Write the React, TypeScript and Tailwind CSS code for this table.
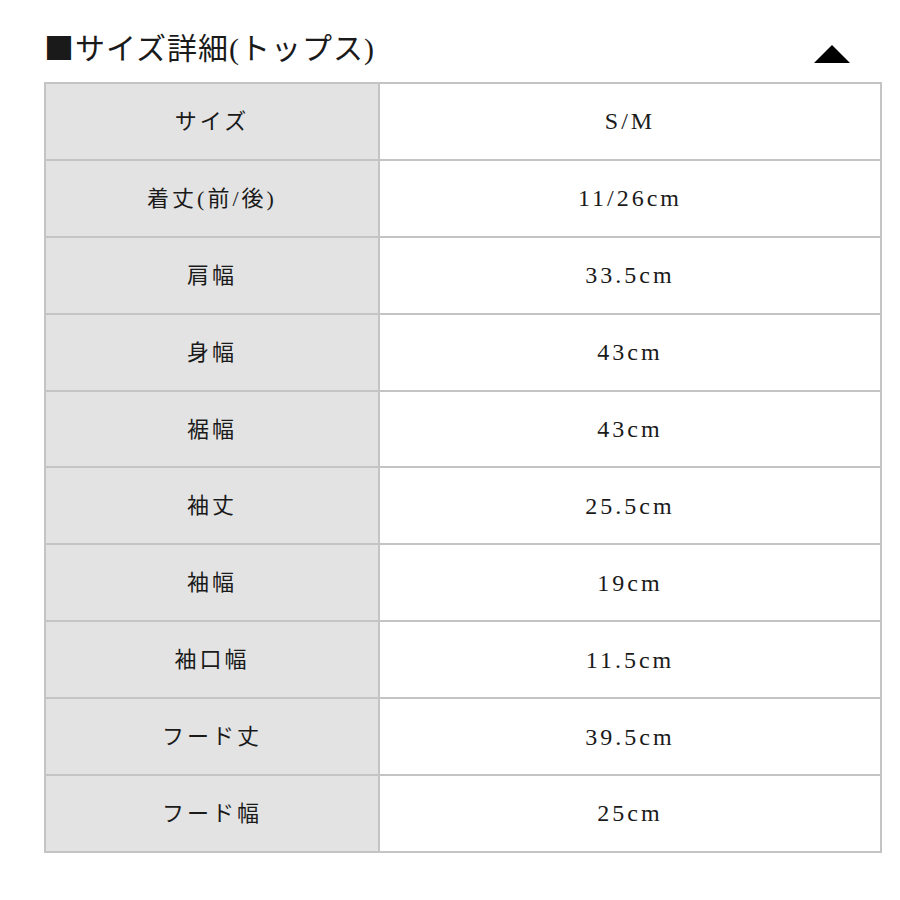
import React from "react";

const rows: [string, string][] = [
  ["サイズ", "S/M"],
  ["着丈(前/後)", "11/26cm"],
  ["肩幅", "33.5cm"],
  ["身幅", "43cm"],
  ["裾幅", "43cm"],
  ["袖丈", "25.5cm"],
  ["袖幅", "19cm"],
  ["袖口幅", "11.5cm"],
  ["フード丈", "39.5cm"],
  ["フード幅", "25cm"],
];

export default function App() {
  return (
    <div
      className="w-[900px] h-[900px] bg-white text-[#1a1a1a]"
      style={{ fontFamily: '"Liberation Serif", "Noto Sans CJK JP", serif' }}
    >
      <div className="flex items-center justify-between pl-[44px] pr-[50px] pt-[26px] h-[82px] pb-[14px]">
        <h2 className="text-[30px] leading-none tracking-[1px]">
          <span style={{ fontFamily: '"Noto Sans CJK JP", sans-serif' }}>■</span>
          サイズ詳細(トップス)
        </h2>
        <svg width="36" height="18" viewBox="0 0 36 18" className="mt-[14px]">
          <polygon points="18,0 36,18 0,18" fill="#000" />
        </svg>
      </div>
      <table className="ml-[44px] w-[838px] border-collapse border-2 border-[#c4c4c4]">
        <tbody>
          {rows.map(([k, v]) => (
            <tr key={k} className="h-[76.9px]">
              <td className="w-[334px] bg-[#e3e3e3] border-2 border-[#c4c4c4] text-center text-[22px] tracking-[3px] font-normal">
                {k}
              </td>
              <td className="border-2 border-[#c4c4c4] text-center text-[24px] tracking-[3px]">
                {v}
              </td>
            </tr>
          ))}
        </tbody>
      </table>
    </div>
  );
}
